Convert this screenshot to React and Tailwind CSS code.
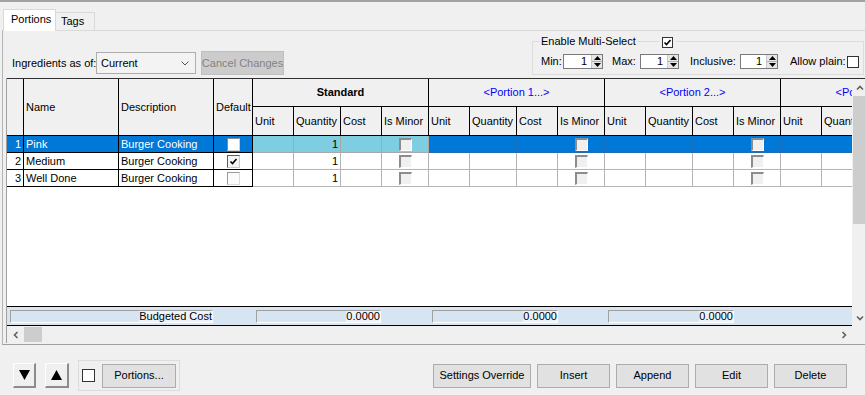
import React from 'react';

const SUB = [
  { l: 'Unit', w: 'w-[41px]' },
  { l: 'Quantity', w: 'w-[47px]' },
  { l: 'Cost', w: 'w-[41px]' },
  { l: 'Is Minor', w: 'w-[47px]' },
];

const GROUPS = [
  { label: 'Standard', cls: 'font-bold', std: true },
  { label: '<Portion 1...>', cls: 'text-[#0000ff]' },
  { label: '<Portion 2...>', cls: 'text-[#0000ff]' },
  { label: '<Portion 3...>', cls: 'text-[#0000ff]' },
];

const ROWS = [
  { n: 1, name: 'Pink', desc: 'Burger Cooking', def: 'sel' },
  { n: 2, name: 'Medium', desc: 'Burger Cooking', def: 'checked' },
  { n: 3, name: 'Well Done', desc: 'Burger Cooking', def: 'off' },
];

function Chev({ dir }) {
  const d = {
    up: 'M1 5.5 L4 2.5 L7 5.5',
    down: 'M1 2.5 L4 5.5 L7 2.5',
    left: 'M5.5 1 L2.5 4 L5.5 7',
    right: 'M2.5 1 L5.5 4 L2.5 7',
  }[dir];
  return (
    <svg width="8" height="8" viewBox="0 0 8 8">
      <path d={d} fill="none" stroke="#606060" strokeWidth="1.6" />
    </svg>
  );
}

function Check({ color = '#000' }) {
  return (
    <svg width="9" height="9" viewBox="0 0 9 9">
      <path d="M1.5 4.5 L3.5 6.5 L7.5 2" fill="none" stroke={color} strokeWidth="1.6" />
    </svg>
  );
}

function Sunken() {
  return (
    <div className="w-[13px] h-[13px] border-t-2 border-l-2 border-r border-b border-t-[#8c8c8c] border-l-[#8c8c8c] border-r-white border-b-white bg-[#f0f0f0]" />
  );
}

function DefBox({ kind }) {
  if (kind === 'sel')
    return <div className="w-[13px] h-[13px] border border-[#8a8a8a] border-r-[#d0d0d0] border-b-[#d0d0d0] bg-white" />;
  if (kind === 'checked')
    return (
      <div className="w-[13px] h-[13px] border border-[#5a5a5a] border-r-[#c8c8c8] border-b-[#c8c8c8] bg-[#f4f4f4] flex items-center justify-center">
        <Check />
      </div>
    );
  return <div className="w-[13px] h-[13px] border border-[#9a9a9a] border-r-[#dadada] border-b-[#dadada] bg-[#fbfbfb]" />;
}

function Row({ r }) {
  const sel = r.n === 1;
  const left = sel ? 'bg-[#0078d7] text-white' : 'bg-white';
  return (
    <div className="flex h-[17px] shrink-0">
      <div className={`w-[17px] shrink-0 border-r border-b border-black flex items-center justify-end pr-[2px] ${left}`}>{r.n}</div>
      <div className={`w-[95px] shrink-0 border-r border-b border-black flex items-center pl-[2px] whitespace-nowrap ${left}`}>{r.name}</div>
      <div className={`w-[95px] shrink-0 border-r border-b border-black flex items-center pl-[2px] whitespace-nowrap ${left}`}>{r.desc}</div>
      <div className={`w-[39px] shrink-0 border-r border-b border-black flex items-center justify-center ${left}`}>
        <DefBox kind={r.def} />
      </div>
      {GROUPS.map((g, gi) => (
        <div key={gi} className="w-[176px] shrink-0 flex">
          {SUB.map((s, si) => {
            const bg = sel ? (g.std ? 'bg-[#7ecde0] border-[#a8a8a8]' : 'bg-[#0078d7] border-[#1f6db5]') : 'bg-white border-[#b4b4b4]';
            return (
              <div key={si} className={`${s.w} shrink-0 border-r border-b flex items-center ${bg} ${si === 1 ? 'justify-end pr-[2px]' : 'justify-center'}`}>
                {si === 1 && g.std ? '1' : null}
                {si === 3 ? <Sunken /> : null}
              </div>
            );
          })}
        </div>
      ))}
    </div>
  );
}

function BBox({ cls, children }) {
  return (
    <div className={`h-[13px] shrink-0 border border-[#a0a0a0] border-r-white border-b-white flex items-center justify-end ${cls}`}>
      <span className="bg-[#eef3f9] leading-[11px]">{children}</span>
    </div>
  );
}

function Spinner({ w }) {
  return (
    <div className={`${w} h-[15px] shrink-0 border border-[#7a7a7a] bg-white flex`}>
      <div className="flex-1 flex items-center justify-end pr-[4px]">1</div>
      <div className="w-[11px] flex flex-col border-l border-[#c8c8c8] bg-[#e6e6e6]">
        <div className="flex-1 flex items-center justify-center border-b border-[#b0b0b0]">
          <svg width="7" height="4" viewBox="0 0 7 4"><polygon points="0,4 3.5,0 7,4" fill="#000" /></svg>
        </div>
        <div className="flex-1 flex items-center justify-center">
          <svg width="7" height="4" viewBox="0 0 7 4"><polygon points="0,0 3.5,4 7,0" fill="#000" /></svg>
        </div>
      </div>
    </div>
  );
}

function Btn({ cls, children }) {
  return (
    <div className={`h-[24px] shrink-0 bg-[#e1e1e1] border border-[#adadad] flex items-center justify-center whitespace-nowrap ${cls}`}>
      {children}
    </div>
  );
}

function ArrowBtn({ up, cls }) {
  return (
    <div className={`h-[25px] shrink-0 bg-[#f0f0f0] border-t border-l border-white border-r-2 border-b-2 border-r-[#8c8c8c] border-b-[#8c8c8c] flex items-center justify-center ${cls}`}>
      <svg width="11" height="10" viewBox="0 0 11 10">
        {up ? <polygon points="0,10 5.5,0 11,10" fill="#000" /> : <polygon points="0,0 5.5,10 11,0" fill="#000" />}
      </svg>
    </div>
  );
}

export default function App() {
  return (
    <div className="w-[865px] h-[395px] bg-[#f0f0f0] overflow-hidden flex flex-col font-['Liberation_Sans',Arial,sans-serif] text-[11px] text-black leading-none select-none">
      <div className="h-[2px] shrink-0 bg-[#a3a3a3]" />
      {/* tab strip */}
      <div className="h-[28px] shrink-0 flex items-end pl-[3px]">
        <div className="relative z-10 -mb-px h-[22px] w-[53px] bg-white border border-b-0 border-[#d9d9d9] flex items-center pl-[7px] pb-[2px]">Portions</div>
        <div className="h-[18px] w-[39px] border border-l-0 border-b-0 border-[#d9d9d9] flex items-center pl-[5px]">Tags</div>
      </div>
      {/* tab page */}
      <div className="h-[315px] shrink-0 ml-[2px] border-l border-t border-b border-l-[#b4b4b4] border-t-[#d9d9d9] border-b-[#a0a0a0] flex flex-col">
        {/* controls */}
        <div className="h-[47px] shrink-0 flex">
          <div className="flex items-center ml-[9px] mt-[20px] h-[24px]">
            <div className="w-[84px] shrink-0 whitespace-nowrap">Ingredients as of:</div>
            <div className="w-[100px] h-[22px] shrink-0 border border-[#adadad] bg-[#f3f3f3] flex items-center pl-[4px] pr-[6px]">
              <span className="flex-1">Current</span>
              <svg width="8" height="5" viewBox="0 0 8 5"><path d="M0.5 0.5 L4 4 L7.5 0.5" fill="none" stroke="#555" strokeWidth="1" /></svg>
            </div>
            <div className="ml-[5px] w-[83px] h-[24px] shrink-0 bg-[#cccccc] border border-[#bfbfbf] text-[#838383] flex items-center justify-center whitespace-nowrap">Cancel Changes</div>
          </div>
          <div className="ml-auto mr-[1px] mt-[10px] w-[332px] h-[34px] border border-[#dcdcdc] relative">
            <div className="absolute left-[7px] top-[-7px] px-[1px] bg-[#f0f0f0] leading-[13px] whitespace-nowrap">Enable Multi-Select</div>
            <div className="absolute left-[126px] top-[-5px] px-[3px] bg-[#f0f0f0]">
              <div className="w-[11px] h-[11px] border border-[#333] bg-white flex items-center justify-center">
                <Check />
              </div>
            </div>
            <div className="flex items-center pt-[12px] pl-[8px] h-[27px]">
              <div className="w-[22px] shrink-0">Min:</div>
              <Spinner w="w-[40px]" />
              <div className="ml-[9px] w-[28px] shrink-0">Max:</div>
              <Spinner w="w-[39px]" />
              <div className="ml-[11px] w-[50px] shrink-0">Inclusive:</div>
              <Spinner w="w-[38px]" />
              <div className="ml-[12px] w-[57px] shrink-0 whitespace-nowrap">Allow plain:</div>
              <div className="w-[12px] h-[12px] shrink-0 border border-[#333] bg-white" />
            </div>
          </div>
        </div>
        {/* grid */}
        <div className="ml-[3px] h-[265px] shrink-0 border-l border-[#a0a0a0] flex flex-col">
          <div className="h-[248px] shrink-0 border-t border-[#303030] flex">
            <div className="w-[845px] shrink-0 overflow-hidden flex flex-col">
              {/* header */}
              <div className="flex h-[57px] shrink-0 bg-[#f0f0f0]">
                <div className="w-[17px] shrink-0 border-r border-b border-black" />
                <div className="w-[95px] shrink-0 border-r border-b border-black flex items-center pl-[2px]">Name</div>
                <div className="w-[95px] shrink-0 border-r border-b border-black flex items-center pl-[2px]">Description</div>
                <div className="w-[39px] shrink-0 border-r border-b border-black flex items-center pl-[2px] whitespace-nowrap overflow-hidden">Default</div>
                {GROUPS.map((g, gi) => (
                  <div key={gi} className="w-[176px] shrink-0 flex flex-col">
                    <div className={`h-[28px] shrink-0 border-r border-b border-black flex items-center justify-center whitespace-nowrap ${g.cls}`}>{g.label}</div>
                    <div className="flex h-[29px] shrink-0">
                      {SUB.map((s, si) => (
                        <div key={si} className={`${s.w} shrink-0 border-r border-b border-black flex items-center pl-[2px] whitespace-nowrap overflow-hidden`}>{s.l}</div>
                      ))}
                    </div>
                  </div>
                ))}
              </div>
              {ROWS.map((r) => (
                <Row key={r.n} r={r} />
              ))}
              <div className="flex-1 bg-white" />
              {/* budget row */}
              <div className="h-[20px] shrink-0 border-t border-b border-black bg-[#d7e4f2] flex items-start pt-[3px]">
                <BBox cls="ml-[3px] w-[203px]">Budgeted Cost</BBox>
                <BBox cls="ml-[43px] w-[125px]">0.0000</BBox>
                <BBox cls="ml-[51px] w-[126px]">0.0000</BBox>
                <BBox cls="ml-[50px] w-[126px]">0.0000</BBox>
              </div>
            </div>
            {/* vertical scrollbar */}
            <div className="w-[13px] shrink-0 bg-[#f0f0f0] flex flex-col">
              <div className="h-[17px] shrink-0 flex items-center justify-center pl-[2px]"><Chev dir="up" /></div>
              <div className="h-[128px] shrink-0 ml-[1px] bg-[#cdcdcd]" />
              <div className="flex-1" />
              <div className="h-[17px] shrink-0 flex items-center justify-center pl-[2px]"><Chev dir="down" /></div>
            </div>
          </div>
          {/* horizontal scrollbar */}
          <div className="h-[17px] shrink-0 flex bg-[#f0f0f0]">
            <div className="w-[17px] shrink-0 flex items-center justify-center"><Chev dir="left" /></div>
            <div className="w-[18px] h-[15px] mt-[1px] shrink-0 bg-[#cdcdcd]" />
            <div className="flex-1" />
            <div className="w-[17px] shrink-0 flex items-center justify-center"><Chev dir="right" /></div>
            <div className="w-[13px] shrink-0" />
          </div>
        </div>
      </div>
      {/* bottom buttons */}
      <div className="flex items-center h-[31px] mt-[15px] shrink-0">
        <ArrowBtn cls="ml-[13px] w-[23px]" />
        <ArrowBtn up cls="ml-[9px] w-[24px]" />
        <div className="ml-[9px] w-[102px] h-[31px] shrink-0 border border-[#dcdcdc] flex items-center">
          <div className="ml-[3px] w-[13px] h-[13px] shrink-0 border border-[#333] bg-white" />
          <Btn cls="ml-[7px] w-[74px]">Portions...</Btn>
        </div>
        <Btn cls="ml-[253px] w-[98px]">Settings Override</Btn>
        <Btn cls="ml-[6px] w-[73px]">Insert</Btn>
        <Btn cls="ml-[6px] w-[73px]">Append</Btn>
        <Btn cls="ml-[6px] w-[73px]">Edit</Btn>
        <Btn cls="ml-[6px] w-[73px]">Delete</Btn>
      </div>
    </div>
  );
}
